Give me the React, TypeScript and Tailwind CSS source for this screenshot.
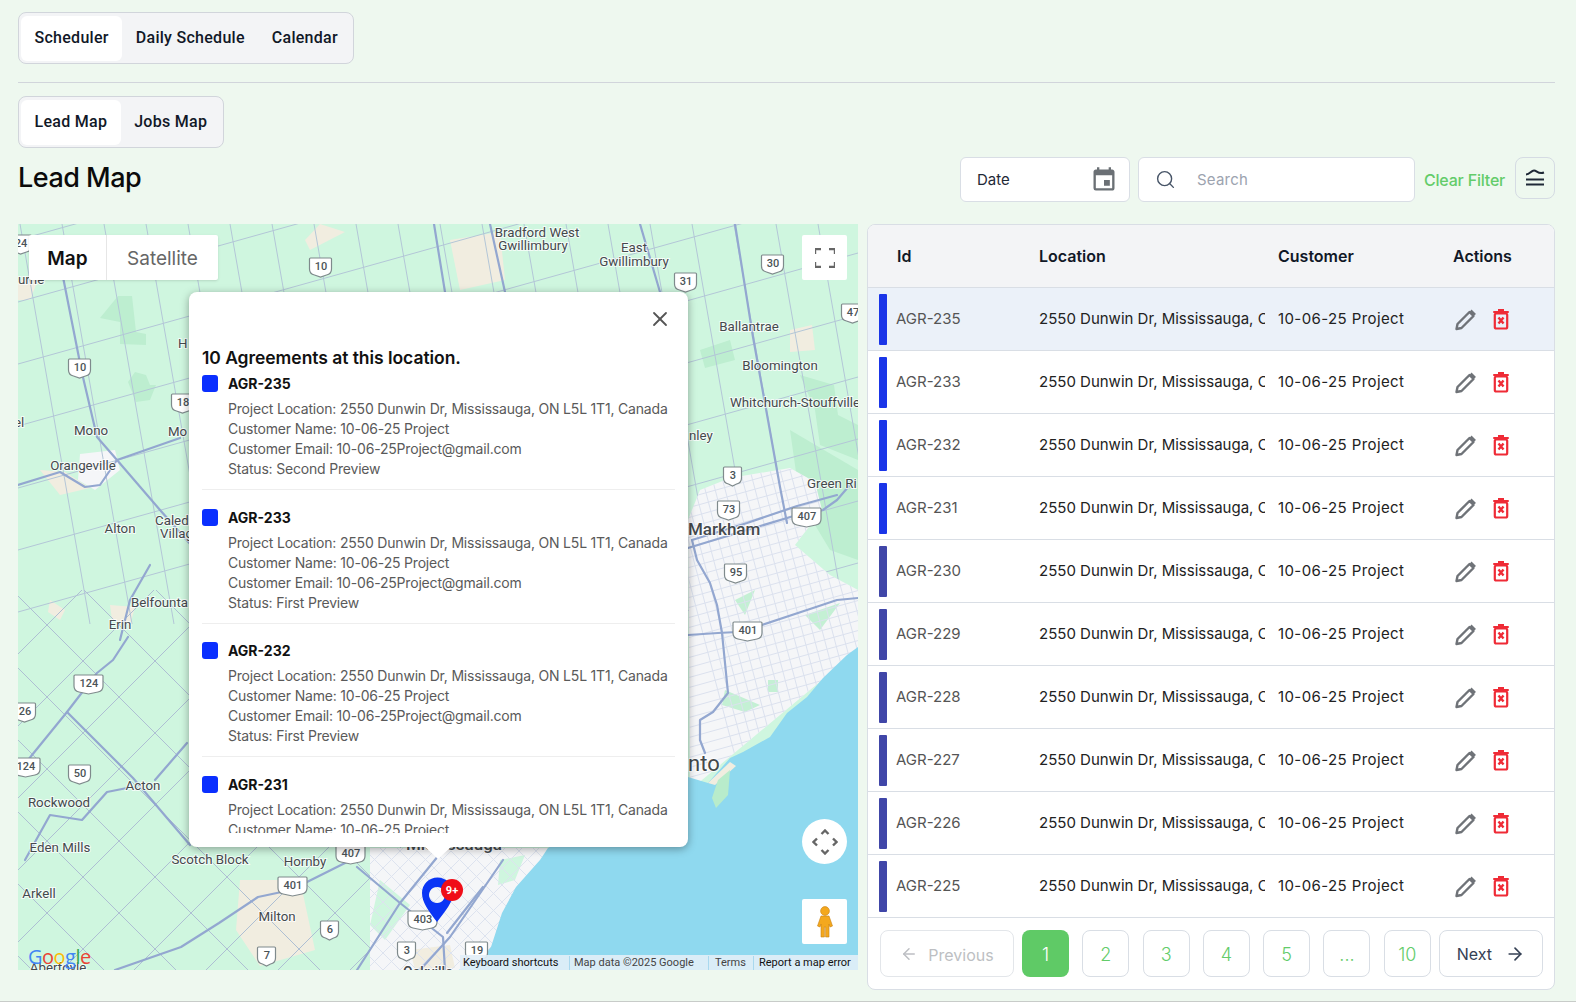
import React from "react";
import { ArrowLeft, ArrowRight, Search, X } from "lucide-react";
import { MdEvent } from "react-icons/md";

const range = (from: number, to: number, step: number) => {
  const out: number[] = [];
  for (let v = from; v <= to; v += step) out.push(v);
  return out;
};

const labels: [string, number, number, string, number?, number?][] = [
  ["Bradford West", 537, 237, "middle"],
  ["Gwillimbury", 533, 250, "middle"],
  ["East", 634, 252, "middle"],
  ["Gwillimbury", 634, 266, "middle"],
  ["Ballantrae", 749, 331, "middle"],
  ["Bloomington", 780, 370, "middle"],
  ["Whitchurch-Stouffville", 730, 407, "start"],
  ["nley", 689, 440, "start"],
  ["Green Ri", 807, 488, "start"],
  ["Markham", 688, 535, "start", 17, 500],
  ["nto", 688, 771, "start", 22, 400],
  ["Orangeville", 83, 470, "middle"],
  ["Mono", 91, 435, "middle"],
  ["Mo", 168, 436, "start"],
  ["H", 178, 348, "start"],
  ["Alton", 120, 533, "middle"],
  ["Caled", 155, 525, "start"],
  ["Villag", 160, 538, "start"],
  ["Belfounta", 131, 607, "start"],
  ["Erin", 120, 629, "middle"],
  ["Acton", 143, 790, "middle"],
  ["Rockwood", 59, 807, "middle"],
  ["Eden Mills", 60, 852, "middle"],
  ["Scotch Block", 210, 864, "middle"],
  ["Hornby", 305, 866, "middle"],
  ["Milton", 277, 921, "middle"],
  ["Arkell", 39, 898, "middle"],
  ["Aberfoyle", 58, 972, "middle"],
  ["urne", 18, 284, "start"],
  ["el", 14, 427, "start"],
  ["Mississauga", 406, 850, "start", 17, 500],
  ["Oakville", 403, 977, "start", 14, 500],
];

const shields: [string, number, number][] = [
  ["10", 321, 266],
  ["31", 686, 281],
  ["30", 773, 263],
  ["47", 853, 312],
  ["10", 80, 367],
  ["18", 183, 402],
  ["3", 733, 475],
  ["73", 729, 509],
  ["407", 807, 516],
  ["95", 736, 572],
  ["401", 748, 630],
  ["124", 89, 683],
  ["26", 25, 711],
  ["124", 26, 766],
  ["50", 80, 773],
  ["407", 351, 853],
  ["401", 293, 885],
  ["6", 330, 929],
  ["7", 267, 955],
  ["3", 407, 950],
  ["19", 477, 950],
  ["403", 423, 919],
  ["24", 21, 243],
];

const highways = [
  "M735 224 L753 337 L768 420 L780 487 L787 523",
  "M688 548 L747 530 L797 515 L823 510 L837 500 L849 486",
  "M692 540 L747 523 L797 506 L837 495",
  "M692 540 L697 560 L710 583 L717 605 L722 633 L728 693 L713 712 L700 720 L700 740 L705 753",
  "M688 635 L718 633 L737 632 L762 625 L813 608 L837 600 L858 598",
  "M18 485 L60 472 L85 487 L100 485 L117 460 L180 438",
  "M63 277 L82 373 L97 437 L117 460 L160 510 L200 555",
  "M128 637 L113 660 L97 673 L67 712 L32 755 L18 773",
  "M67 712 L133 778 L190 845",
  "M25 860 L50 815 L82 820 L107 792 L127 788",
  "M155 780 L187 743",
  "M120 640 L130 600 L150 565",
  "M115 970 L181 947 L219 923 L258 897 L291 890 L351 860",
  "M357 867 L400 903 L443 937 L445 970",
  "M443 850 L400 903 L357 970",
  "M503 860 L450 937 L420 970",
  "M483 887 L447 933",
  "M434 224 L445 292",
  "M490 224 L505 292",
  "M640 224 L660 292",
];

const Shield = ({ text, x, y }: { text: string; x: number; y: number }) => {
  const w = text.length === 1 ? 15 : text.length === 2 ? 19 : 26;
  return (
    <g>
      <path
        d={`M${x - w / 2} ${y - 8} h${w} q1 0 1 1 v10 q0 5 -5 6 l-${w / 2 - 3.5} 2 l-${w / 2 - 3.5} -2 q-5 -1 -5 -6 v-10 q0 -1 1 -1z`}
        fill="#fff"
        stroke="#7f8a8c"
        strokeWidth="1.2"
      />
      <text x={x} y={y + 4} textAnchor="middle" fontSize="11" fontWeight="500" fill="#4b5357" fontFamily="Roboto, sans-serif">
        {text}
      </text>
    </g>
  );
};

const MapDrawing = () => (
  <svg viewBox="18 224 840 746" className="absolute inset-0 h-full w-full">
    <defs>
      <clipPath id="cityEast">
        <polygon points="688,520 700,490 730,478 790,468 815,482 822,510 795,545 830,575 858,590 858,650 690,790" />
      </clipPath>
      <clipPath id="citySouth">
        <polygon points="370,848 548,848 505,930 480,970 370,970" />
      </clipPath>
      <clipPath id="diag">
        <rect x="18" y="590" width="480" height="380" />
      </clipPath>
      <clipPath id="north">
        <rect x="18" y="224" width="840" height="400" />
      </clipPath>
    </defs>
    <rect x="18" y="224" width="840" height="746" fill="#cff6df" />
    <g fill="#bdeed0">
      <path d="M118 296 L132 296 L136 332 L146 334 L146 345 L120 344 L120 322 L100 318z" />
      <path d="M135 372 L146 375 L150 385 L156 385 L150 400 L136 402 L128 382z" />
      <path d="M800 375 L834 385 L838 415 L858 425 L858 460 L820 445 L815 410z" />
      <path d="M790 430 L858 470 L858 560 L830 550 L800 500z" />
      <path d="M700 350 L730 340 L735 360 L705 368z" />
      <path d="M740 900 L760 890 L770 910 L745 920z" />
    </g>
    <g fill="#f1ede0">
      <path d="M790 330 L812 325 L815 350 L790 352z" />
      <path d="M450 240 L500 232 L505 280 L460 290z" />
      <path d="M320 224 L345 232 L310 250 L305 240z" />
      <path d="M240 880 L300 880 L315 950 L260 966 L236 930z" />
      <path d="M40 470 L65 472 L90 488 L60 495z" />
      <path d="M50 600 L65 610 L60 620 L48 612z" />
      <path d="M110 605 L135 607 L130 625 L112 620z" />
      <path d="M18 280 L38 280 L30 300 L18 300z" />
    </g>
    <path d="M80 454 L115 450 L120 470 L95 490 L78 480z" fill="#f5f6f8" />
    <g stroke="#b3c6d7" strokeWidth="1" fill="none" clipPath="url(#north)">
      {range(20, 860, 42).map((x) => (
        <line key={`n${x}`} x1={x} y1={224} x2={x + 70} y2={624} />
      ))}
      {range(240, 1060, 62).map((y) => (
        <line key={`e${y}`} x1={18} y1={y} x2={858} y2={y - 235} />
      ))}
    </g>
    <g stroke="#aebfd3" strokeWidth="1" fill="none" clipPath="url(#diag)">
      {range(-300, 500, 72).map((c) => (
        <line key={`d${c}`} x1={0} y1={590 + c} x2={500} y2={1090 + c} />
      ))}
      {range(600, 1500, 72).map((c) => (
        <line key={`f${c}`} x1={0} y1={c} x2={500} y2={c - 500} />
      ))}
    </g>
    <polygon points="688,520 700,490 730,478 790,468 815,482 822,510 795,545 830,575 858,590 858,650 690,790" fill="#f5f6f8" />
    <polygon points="370,848 548,848 505,930 480,970 370,970" fill="#f5f6f8" />
    <path d="M380 880 L410 905 L385 940 L370 925z" fill="#cff6df" />
    <path d="M500 860 L525 855 L515 880 L498 885z" fill="#cff6df" />
    <path d="M410 950 L450 945 L455 968 L415 970z" fill="#f1ede0" />
    <path d="M768 680 L778 680 L778 692 L768 692z M725 690 L760 705 L745 712 L722 705z M735 600 L755 590 L745 615z M805 615 L840 603 L820 630z" fill="#c4f0d4" />
    <g stroke="#dbe1ee" strokeWidth="1" clipPath="url(#cityEast)">
      {range(660, 860, 10).map((x) => (
        <line key={`a${x}`} x1={x} y1={470} x2={x + 84} y2={790} />
      ))}
      {range(480, 1000, 10).map((y) => (
        <line key={`b${y}`} x1={680} y1={y} x2={860} y2={y - 50} />
      ))}
    </g>
    <g stroke="#dde3ef" strokeWidth="1" clipPath="url(#citySouth)">
      {range(100, 600, 17).map((c) => (
        <line key={`c${c}`} x1={c} y1={840} x2={c + 130} y2={970} />
      ))}
      {range(360, 900, 17).map((c) => (
        <line key={`g${c}`} x1={c} y1={840} x2={c - 130} y2={970} />
      ))}
    </g>
    <polygon
      points="858,647 847,655 823,678 807,697 787,713 770,737 743,752 730,758 708,783 688,777 600,815 548,848 540,860 516,887 502,913 491,947 483,957 455,972 858,972"
      fill="#8fd9ef"
    />
    <path d="M730 762 L708 783 L715 785 L736 766z" fill="#f1ede0" />
    <path d="M718 780 L730 770 L728 795 L716 808 L712 798z" fill="#b8eccb" />
    <g stroke="#93a7d0" strokeWidth="2.2" fill="none" strokeLinejoin="round" strokeLinecap="round">
      {highways.map((d) => (
        <path key={d} d={d} />
      ))}
    </g>
    {labels.map(([t, x, y, anchor, size, weight]) => (
      <text
        key={`${t}${x}`}
        x={x}
        y={y}
        textAnchor={anchor as "start" | "middle"}
        fontSize={size ?? 13.3}
        fontWeight={weight ?? 400}
        fill="#44494c"
        stroke="#ffffff"
        strokeOpacity="0.75"
        strokeWidth="2"
        paintOrder="stroke"
        fontFamily="Roboto, sans-serif"
      >
        {t}
      </text>
    ))}
    {shields.map(([t, x, y]) => (
      <Shield key={`${t}${x}`} text={t} x={x} y={y} />
    ))}
    <path d="M437 922 C428 910 422 902 422 893 A15.5 15.5 0 0 1 453 893 C453 902 446 910 437 922z M437 887 a8 8 0 1 0 0.01 0z" fill="#0a35f5" fillRule="evenodd" />
    <circle cx="452" cy="890" r="11" fill="#f00d18" />
    <text x="452" y="894" textAnchor="middle" fontSize="11" fontWeight="700" fill="#fff" fontFamily="Roboto, sans-serif">
      9+
    </text>
  </svg>
);

const PopupItem = ({ id, status }: { id: string; status: string }) => (
  <div className="mb-[18.5px] h-[115px] border-b border-[#eeeeee]">
    <div className="flex h-[17px] items-center">
      <span className="h-[17px] w-[16px] rounded-[3px] bg-[#0a2fff]" />
      <span className="ml-[10px] text-[14px] font-bold text-[#111111]">{id}</span>
    </div>
    <div className="mt-[7px] pl-[26px] text-[14px] leading-[20px] tracking-[-0.19px] whitespace-nowrap text-[#5a5a5a]">
      <div>Project Location: 2550 Dunwin Dr, Mississauga, ON L5L 1T1, Canada</div>
      <div>Customer Name: 10-06-25 Project</div>
      <div>Customer Email: 10-06-25Project@gmail.com</div>
      <div>Status: {status}</div>
    </div>
  </div>
);

const Pencil = () => (
  <svg width="23" height="23" viewBox="0 0 23 23" fill="none">
    <path d="M15.5 4 L19.5 8 L7.5 20 L2.5 21 L3.5 16 Z" stroke="#6f7378" strokeWidth="2.4" strokeLinejoin="round" />
    <path d="M17.5 1.5 L22 6 L19.5 8 L15.5 4 Z" fill="#6f7378" />
  </svg>
);

const Trash = () => (
  <svg width="18" height="22" viewBox="0 0 18 22" fill="none">
    <rect x="6" y="1" width="6" height="2" fill="#ef2b36" />
    <rect x="1" y="3" width="16" height="2" rx="1" fill="#ef2b36" />
    <rect x="2.8" y="5.5" width="12.4" height="15" rx="1.5" stroke="#ef2b36" strokeWidth="2.2" />
    <path d="M6.5 9.5 L11.5 15.5 M11.5 9.5 L6.5 15.5" stroke="#ef2b36" strokeWidth="2.4" />
  </svg>
);

const rows: [string, string][] = [
  ["AGR-235", "#1a35e8"],
  ["AGR-233", "#1a35e8"],
  ["AGR-232", "#1a35e8"],
  ["AGR-231", "#1a35e8"],
  ["AGR-230", "#4046a8"],
  ["AGR-229", "#4046a8"],
  ["AGR-228", "#4046a8"],
  ["AGR-227", "#4046a8"],
  ["AGR-226", "#4046a8"],
  ["AGR-225", "#4046a8"],
];

const Tab = ({ label, active }: { label: string; active?: boolean }) => (
  <div className={`flex h-[45px] items-center rounded-md px-[13.5px] text-[16px] font-medium tracking-[0.28px] text-[#111827] ${active ? "bg-white" : ""}`}>{label}</div>
);

const pageButton = "flex h-[47px] w-[47px] items-center justify-center rounded-lg border border-[#d9dee5] pt-[1px] text-[18px] font-light text-[#63cc6a]";

export default function App() {
  return (
    <div className="relative h-[1002px] w-full overflow-hidden border-b border-[#c8ccc9] bg-[#eef8ef] pr-[21px] pl-[18px] font-['Inter',sans-serif]">
      <div className="pt-3 font-['Roboto',sans-serif]">
        <div className="flex h-[52px] w-fit items-center rounded-lg border border-[#d1d5db] bg-[#f3f4f6] px-[2px]">
          <Tab label="Scheduler" active />
          <Tab label="Daily Schedule" />
          <Tab label="Calendar" />
        </div>
        <div className="mt-[18px] mb-[13px] h-px bg-[#d1d5db]" />
        <div className="flex h-[52px] w-fit items-center rounded-lg border border-[#d1d5db] bg-[#f3f4f6] px-[2px]">
          <Tab label="Lead Map" active />
          <Tab label="Jobs Map" />
        </div>
      </div>

      <div className="mt-[9px] flex h-[45px] items-start justify-between">
        <h1 className="mt-[1px] text-[27px] leading-[40px] font-medium tracking-[-0.5px] text-[#0b0b0b]">Lead Map</h1>
        <div className="flex items-start">
          <div className="flex h-[45px] w-[170px] items-center justify-between rounded-md border border-[#d9dee5] bg-white pr-[11px] pl-[16px] text-[15px] text-[#1f2937]">
            <span className="mt-[1px]">Date</span>
            <MdEvent size={28} className="text-[#6b7075]" />
          </div>
          <div className="ml-[8px] flex h-[45px] w-[277px] items-center rounded-md border border-[#d9dee5] bg-white pl-[16px] text-[15px] text-[#9ca3af]">
            <Search size={21} strokeWidth={1.6} className="text-[#475467]" />
            <span className="mt-[2px] ml-[21px] tracking-[0.2px]">Search</span>
          </div>
          <span className="ml-[9px] flex h-[45px] w-[82px] items-center text-[16px] font-medium tracking-[-0.2px] whitespace-nowrap text-[#63cc6a]">Clear Filter</span>
          <div className="ml-[9px] flex h-[42px] w-[40px] items-center justify-center rounded-lg border border-[#d5dbe3]">
            <svg width="20" height="18" viewBox="0 0 20 18" fill="none" stroke="#1f2937" strokeWidth="2">
              <path d="M1 5.5 C5 5.5 6 1.5 9 1.5 C12 1.5 13 5.5 19 3.5" />
              <path d="M1 10.5 H19" />
              <path d="M1 15.5 H19" />
            </svg>
          </div>
        </div>
      </div>

      <div className="mt-[22px] flex items-start gap-[9px]">
        <div className="relative h-[746px] w-[840px] shrink-0 overflow-hidden">
          <MapDrawing />

          <div className="absolute top-[11px] left-[11px] flex h-[45px] items-center rounded-[2px] bg-white pt-0 text-[19px] shadow-sm">
            <span className="flex h-full w-[78px] items-center justify-center border-r border-[#e6e6e6] pt-[3px] font-semibold text-[#111111]">Map</span>
            <span className="flex h-full w-[111px] items-center justify-center pt-[3px] text-[#666666]">Satellite</span>
          </div>

          <div className="absolute top-[11px] right-[11px] flex h-[45px] w-[45px] items-center justify-center rounded-[2px] bg-white">
            <svg width="20" height="20" viewBox="0 0 20 20" fill="none" stroke="#666666" strokeWidth="2.4">
              <path d="M0 6 V1 H6 M14 1 H20 V6 M20 14 V19 H14 M6 19 H0 V14" />
            </svg>
          </div>

          <div className="absolute top-[595px] right-[11px] flex h-[45px] w-[45px] items-center justify-center rounded-full bg-white">
            <svg width="26" height="26" viewBox="0 0 26 26" fill="none" stroke="#666666" strokeWidth="2.4">
              <path d="M9.5 5 L13 1.5 L16.5 5 M9.5 21 L13 24.5 L16.5 21 M5 9.5 L1.5 13 L5 16.5 M21 9.5 L24.5 13 L21 16.5" />
            </svg>
          </div>

          <div className="absolute top-[675px] right-[11px] flex h-[45px] w-[45px] items-center justify-center rounded-[2px] bg-white">
            <svg width="18" height="32" viewBox="0 0 18 32" fill="#f4a81d" stroke="#c77f10" strokeWidth="0.6">
              <circle cx="9" cy="5" r="4.4" />
              <path d="M5 10 H13 L16.5 20 L14 21 L13 18 V31 H9.6 V21 H8.4 V31 H5 V18 L4 21 L1.5 20 Z" />
            </svg>
          </div>

          <div className="absolute top-[721px] left-[10px] text-[20px] leading-[24px] font-medium tracking-[-0.5px] font-['Open_Sans',sans-serif]">
            <span className="text-[#4285f4]">G</span>
            <span className="text-[#ea4335]">o</span>
            <span className="text-[#fbbc05]">o</span>
            <span className="text-[#4285f4]">g</span>
            <span className="text-[#34a853]">l</span>
            <span className="text-[#ea4335]">e</span>
          </div>

          <div className="absolute right-0 bottom-0 flex h-[15px] items-center bg-[#e2eef7]/90 pt-[1px] text-[11px] whitespace-nowrap font-['Roboto',sans-serif]">
            <span className="w-[109px] pl-[3px] text-[#111111]">Keyboard shortcuts</span>
            <span className="flex h-full w-[139px] items-center border-l border-[#a9d8ee] pl-[4px] text-[#444444]">Map data ©2025 Google</span>
            <span className="flex h-full w-[45px] items-center border-l border-[#a9d8ee] pl-[6px] text-[#444444]">Terms</span>
            <span className="flex h-full w-[105px] items-center border-l border-[#a9d8ee] pl-[5px] text-[#111111]">Report a map error</span>
          </div>

          <div className="absolute top-[68px] left-[171px] h-[555px] w-[499px] rounded-lg bg-white shadow-[0_2px_8px_rgba(0,0,0,0.35)]">
            <span className="absolute bottom-[-12px] left-[235px] h-0 w-0 border-t-[13px] border-r-[14px] border-l-[14px] border-t-white border-r-transparent border-l-transparent" />
            <X size={24} strokeWidth={1.8} className="absolute top-[15px] right-[16px] text-[#555555]" />
            <div className="mx-[13px] h-[541px] overflow-hidden pt-[54px]">
              <div className="h-[24px] text-[17.5px] leading-[24px] font-semibold tracking-[-0.05px] text-[#111111]">10 Agreements at this location.</div>
              <div className="mt-[5px]">
                <PopupItem id="AGR-235" status="Second Preview" />
                <PopupItem id="AGR-233" status="First Preview" />
                <PopupItem id="AGR-232" status="First Preview" />
                <PopupItem id="AGR-231" status="First Preview" />
              </div>
            </div>
          </div>
        </div>

        <div className="h-[766px] w-[688px] shrink-0 overflow-hidden rounded-lg border border-[#d9dee5] bg-white">
          <div className="flex h-[63px] items-center border-b border-[#d9dee5] bg-[#f3f4f6] text-[16px] font-semibold text-[#111827]">
            <span className="w-[171px] pl-[29px]">Id</span>
            <span className="w-[239px]">Location</span>
            <span className="w-[175px]">Customer</span>
            <span>Actions</span>
          </div>
          {rows.map(([id, color], i) => (
            <div key={id} className={`flex h-[63px] items-center border-b border-[#d9dee5] text-[15px] ${i === 0 ? "bg-[#ebf1f9]" : ""}`}>
              <span className="ml-[11px] h-[51px] w-[8px] rounded-[1px]" style={{ background: color }} />
              <span className="mt-[1px] w-[152px] pl-[9px] text-[#555555]">{id}</span>
              <span className="w-[226px] overflow-hidden whitespace-nowrap text-[#222222]">2550 Dunwin Dr, Mississauga, ON L5L 1T1, Canada</span>
              <span className="ml-[13px] w-[175px] tracking-[0.4px] text-[#222222]">10-06-25 Project</span>
              <span className="flex items-center gap-[15px] pl-[1px]">
                <Pencil />
                <Trash />
              </span>
            </div>
          ))}
          <div className="flex items-center gap-[8px] pt-[12px] pl-[12px] text-[16px]">
            <div className="flex h-[47px] w-[134px] items-center justify-center gap-[10px] rounded-lg border border-[#e3e6ea] text-[#bdbfc3]">
              <ArrowLeft size={18} />
              <span className="mt-[2px]">Previous</span>
            </div>
            <div className="flex gap-[13.3px]">
              <div className="flex h-[47px] w-[47px] items-center justify-center rounded-lg bg-[#5fca66] pt-[1px] text-[18px] font-light text-white">1</div>
              <div className={pageButton}>2</div>
              <div className={pageButton}>3</div>
              <div className={pageButton}>4</div>
              <div className={pageButton}>5</div>
              <div className={pageButton}>...</div>
              <div className={pageButton}>10</div>
            </div>
            <div className="flex h-[47px] w-[104px] items-center justify-center gap-[13px] rounded-lg border border-[#d9dee5] text-[#344054]">
              <span className="mt-[1px]">Next</span>
              <ArrowRight size={20} />
            </div>
          </div>
        </div>
      </div>
    </div>
  );
}
